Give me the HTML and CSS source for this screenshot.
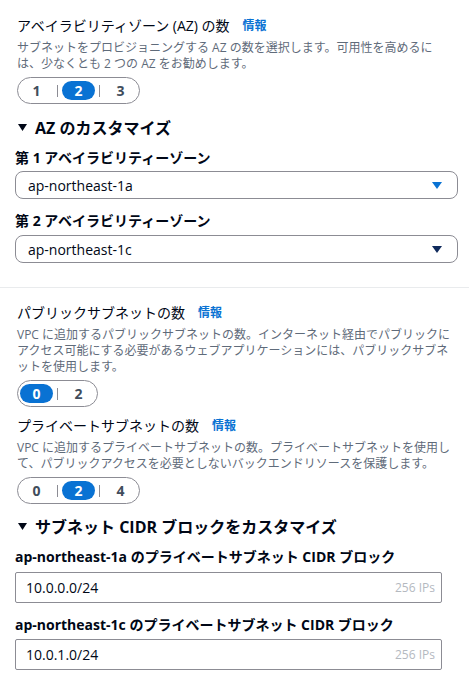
FILE: index.html
```html
<!DOCTYPE html>
<html lang="ja">
<head>
<meta charset="utf-8">
<link rel="stylesheet" href="styles.css">
</head>
<body>
<div class="page">
  <section class="field first">
    <div class="title-row"><span class="title">アベイラビリティゾーン (AZ) の数</span><a class="info">情報</a></div>
    <p class="desc">サブネットをプロビジョニングする AZ の数を選択します。可用性を高めるには、少なくとも 2 つの AZ をお勧めします。</p>
    <div class="seg">
      <span class="seg-btn">1</span><span class="seg-sep"></span><span class="seg-btn on">2</span><span class="seg-sep"></span><span class="seg-btn">3</span>
    </div>
  </section>

  <div class="expander az-exp">
    <svg class="tri" width="9" height="7" viewBox="0 0 9 7"><path d="M0 0H9L4.5 7Z" fill="#000716"/></svg>
    <span>AZ のカスタマイズ</span>
  </div>

  <div class="label lbl1">第 1 アベイラビリティーゾーン</div>
  <div class="select">
    <span>ap-northeast-1a</span>
    <svg class="caret" width="10" height="7" viewBox="0 0 10 7"><path d="M0 0H10L5 7Z" fill="#0972d3"/></svg>
  </div>
  <div class="label lbl2">第 2 アベイラビリティーゾーン</div>
  <div class="select sel2">
    <span>ap-northeast-1c</span>
    <svg class="caret" width="10" height="7" viewBox="0 0 10 7"><path d="M0 0H10L5 7Z" fill="#0f2a5c"/></svg>
  </div>

  <hr class="divider">

  <section class="field pub">
    <div class="title-row"><span class="title">パブリックサブネットの数</span><a class="info">情報</a></div>
    <p class="desc">VPC に追加するパブリックサブネットの数。インターネット経由でパブリックにアクセス可能にする必要があるウェブアプリケーションには、パブリックサブネットを使用します。</p>
    <div class="seg">
      <span class="seg-btn on">0</span><span class="seg-sep"></span><span class="seg-btn">2</span>
    </div>
  </section>

  <section class="field priv">
    <div class="title-row"><span class="title">プライベートサブネットの数</span><a class="info">情報</a></div>
    <p class="desc">VPC に追加するプライベートサブネットの数。プライベートサブネットを使用して、パブリックアクセスを必要としないバックエンドリソースを保護します。</p>
    <div class="seg">
      <span class="seg-btn">0</span><span class="seg-sep"></span><span class="seg-btn on">2</span><span class="seg-sep"></span><span class="seg-btn">4</span>
    </div>
  </section>

  <div class="expander cidr-exp">
    <svg class="tri" width="9" height="7" viewBox="0 0 9 7"><path d="M0 0H9L4.5 7Z" fill="#000716"/></svg>
    <span>サブネット CIDR ブロックをカスタマイズ</span>
  </div>

  <div class="label lbl3">ap-northeast-1a のプライベートサブネット CIDR ブロック</div>
  <div class="input">
    <span>10.0.0.0/24</span><span class="ips">256 IPs</span>
  </div>
  <div class="label lbl4">ap-northeast-1c のプライベートサブネット CIDR ブロック</div>
  <div class="input in2">
    <span>10.0.1.0/24</span><span class="ips">256 IPs</span>
  </div>
</div>
</body>
</html>
```

FILE: styles.css
```css
* { box-sizing: border-box; }
html, body { margin: 0; padding: 0; background: #fff; }
body {
  font-family: "Open Sans", "Noto Sans CJK JP", sans-serif;
  color: #000716;
  width: 469px;
  height: 686px;
  overflow: hidden;
}
.page {
  padding: 15px 11px 0 15px;
}
.field { padding-left: 2px; }
.title-row {
  display: flex;
  align-items: center;
  height: 22px;
}
.title {
  font-size: 14px;
  line-height: 22px;
  color: #000716;
}
.info {
  margin-left: 13px;
  font-size: 12px;
  font-weight: 700;
  color: #0972d3;
  line-height: 22px;
}
.desc {
  margin: 3px 0 0;
  font-size: 12px;
  line-height: 16px;
  color: #5f6b7a;
}
.first .desc { max-width: 432px; }
.seg {
  margin-top: 5px;
  display: inline-flex;
  align-items: center;
  height: 27px;
  padding: 0 2px;
  border: 1px solid #8c8c94;
  border-radius: 14px;
}
.seg-btn {
  width: 33px;
  height: 19px;
  border-radius: 10px;
  display: flex;
  align-items: center;
  justify-content: center;
  font-size: 14px;
  font-weight: 700;
  color: #414d5c;
}
.seg-btn.on {
  background: #0972d3;
  color: #fff;
}
.seg-sep {
  width: 1px;
  height: 12px;
  margin: 0 4px;
  background: #8c8c94;
}
.expander {
  display: flex;
  align-items: center;
  height: 22px;
  padding-left: 3px;
  font-size: 16px;
  font-weight: 700;
  color: #000716;
}
.expander .tri { margin-right: 8px; }
.az-exp { margin-top: 12px; }
.label {
  font-size: 14px;
  font-weight: 700;
  line-height: 22px;
  color: #000716;
}
.lbl1 { margin-top: 9px; }
.lbl2 { margin-top: 11px; }
.select {
  margin-top: 2px;
  height: 28px;
  border: 1px solid #8c8c94;
  border-radius: 8px;
  display: flex;
  align-items: center;
  justify-content: space-between;
  padding: 0 15px 0 12px;
  font-size: 14px;
  color: #000716;
}
.sel2 { margin-top: 3px; }
.divider {
  margin: 24px -11px 0 -15px;
  border: 0;
  border-top: 1px solid #e9ebed;
  height: 0;
}
.pub { margin-top: 14px; }
.priv { margin-top: 8px; }
.cidr-exp { margin-top: 11px; }
.lbl3 { margin-top: 9px; }
.lbl4 { margin-top: 11px; }
.input {
  margin-top: 4px;
  width: 427px;
  height: 31px;
  border: 1px solid #8c8c94;
  border-radius: 2px;
  display: flex;
  align-items: center;
  justify-content: space-between;
  padding: 0 6px 0 10px;
  font-size: 14px;
  color: #000716;
}
.in2 { margin-top: 3px; }
.ips {
  font-size: 12px;
  color: #b4b9bf;
}
```
